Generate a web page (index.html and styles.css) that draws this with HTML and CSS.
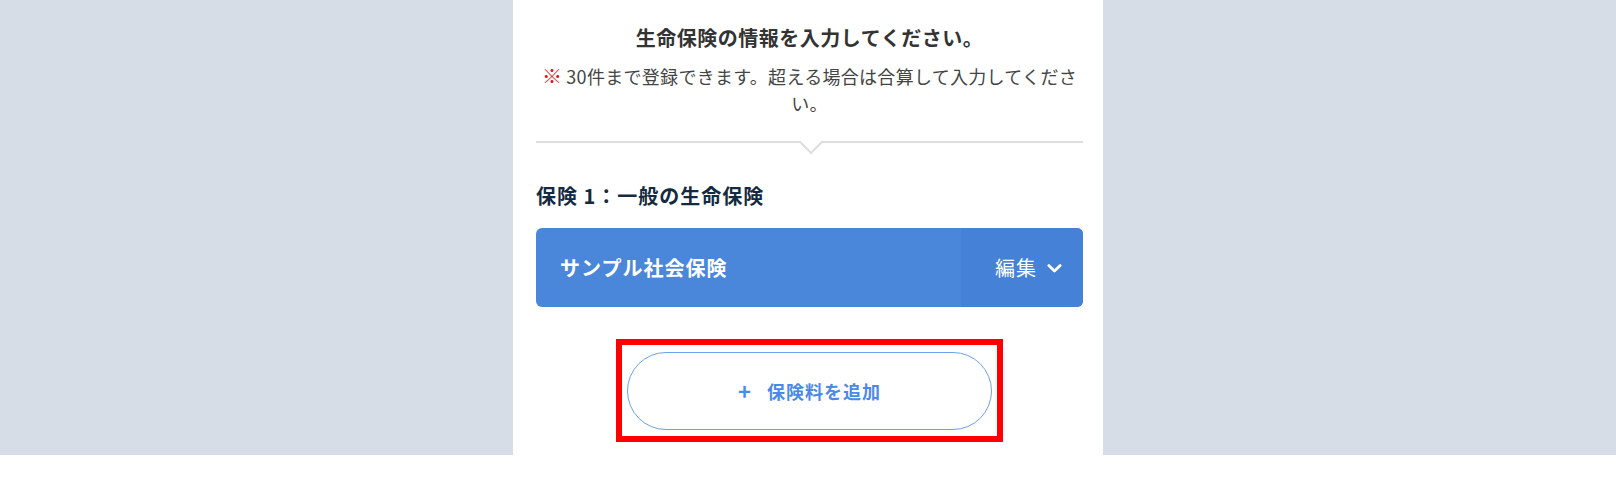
FILE: index.html
```html
<!DOCTYPE html>
<html lang="ja">
<head>
<meta charset="utf-8">
<title>生命保険の情報</title>
<link rel="stylesheet" href="styles.css">
</head>
<body>
<div class="stage">
  <main class="panel">
    <h1 class="title">生命保険の情報を入力してください。</h1>
    <p class="notice"><span class="mark">※</span> 30件まで登録できます。超える場合は合算して入力してください。</p>
    <div class="divider"></div>
    <h2 class="heading">保険 1：一般の生命保険</h2>
    <div class="card">
      <div class="card-name">サンプル社会保険</div>
      <div class="card-edit">
        <span class="edit-label">編集</span>
        <svg class="chev" width="15" height="9" viewBox="0 0 15 9" aria-hidden="true"><path d="M1.8 1.6 L7.5 7 L13.2 1.6" fill="none" stroke="#fff" stroke-width="2.8" stroke-linecap="round" stroke-linejoin="round"/></svg>
      </div>
    </div>
    <div class="highlight">
      <button class="add-btn" type="button"><span class="plus">+</span>保険料を追加</button>
    </div>
  </main>
</div>
</body>
</html>
```

FILE: styles.css
```css
* { box-sizing: border-box; }
html, body {
  margin: 0;
  padding: 0;
  background: #ffffff;
  font-family: "Noto Sans CJK JP", "Noto Sans", sans-serif;
}
.stage {
  height: 455px;
  background: #d6dde7;
  overflow: hidden;
  display: flex;
  justify-content: center;
}
.panel {
  width: 590px;
  background: #ffffff;
  padding: 0 20px 0 23px;
  display: flex;
  flex-direction: column;
}
.title {
  margin: 23px 0 0;
  font-size: 20px;
  line-height: 30px;
  font-weight: 700;
  letter-spacing: 0.5px;
  color: #333333;
  text-align: center;
}
.notice {
  margin: 10px 0 0;
  font-size: 18px;
  line-height: 27px;
  letter-spacing: 0.3px;
  color: #444444;
  text-align: center;
}
.mark {
  color: #e8141e;
  font-weight: 700;
  font-size: 20px;
  line-height: 0;
  letter-spacing: 0;
}
.divider {
  margin-top: 24px;
  height: 2px;
  background: #dddddd;
  position: relative;
}
.divider::after {
  content: "";
  position: absolute;
  left: 50%;
  top: -6px;
  width: 14px;
  height: 14px;
  margin-left: -7px;
  background: #ffffff;
  border-right: 2px solid #dddddd;
  border-bottom: 2px solid #dddddd;
  transform: rotate(45deg);
}
.heading {
  margin: 38px 0 0;
  font-size: 20px;
  line-height: 30px;
  font-weight: 700;
  letter-spacing: 1px;
  color: #142a40;
}
.card {
  margin-top: 17px;
  height: 79px;
  border-radius: 6px;
  overflow: hidden;
  background: #4a87da;
  display: flex;
  color: #ffffff;
}
.card-name {
  flex: 1;
  display: flex;
  align-items: center;
  padding-left: 24px;
  font-size: 20px;
  font-weight: 700;
  letter-spacing: 1px;
}
.card-edit {
  width: 122px;
  background: #4581d6;
  display: flex;
  align-items: center;
  justify-content: flex-end;
  padding-right: 21px;
  gap: 10px;
  font-size: 20px;
  letter-spacing: 1px;
}
.chev { display: block; margin-top: 1px; }
.highlight {
  align-self: center;
  margin-top: 32px;
  border: 6px solid #ff0000;
  padding: 7px 5px 6px;
}
.add-btn {
  display: flex;
  align-items: center;
  justify-content: center;
  width: 365px;
  height: 78px;
  border: 1.5px solid #6aa0ee;
  border-radius: 39px;
  background: #ffffff;
  color: #4a8ae6;
  font-family: "Noto Sans CJK JP", "Noto Sans", sans-serif;
  font-size: 18px;
  font-weight: 700;
  letter-spacing: 1px;
  padding: 0;
}
.plus {
  font-size: 22px;
  font-weight: 700;
  margin-right: 15px;
  margin-top: -2px;
}
```
